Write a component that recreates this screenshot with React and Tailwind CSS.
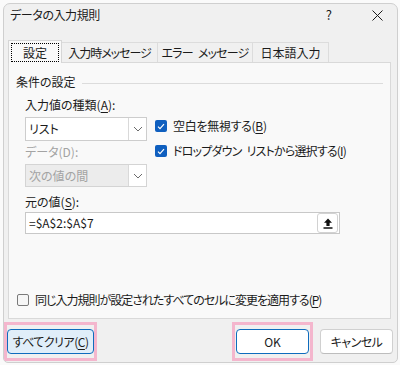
import React from 'react'

const FONT = "[font-family:'Noto_Sans_CJK_JP','Noto_Sans',sans-serif] [font-feature-settings:'palt']"

const Chevron = () => (
    <svg width="10" height="6" viewBox="0 0 10 6" fill="none">
        <path d="M1 1 L5 5 L9 1" stroke="#6b6b6b" strokeWidth="1" />
    </svg>
)

const Check = ({ checked }) => (
    checked ? (
        <span className="w-[12px] h-[12px] rounded-[2px] bg-[#0f5fbf] flex items-center justify-center shrink-0">
            <svg width="8" height="7" viewBox="0 0 8 7" fill="none">
                <path d="M1 3.6 L3 5.6 L7 1.2" stroke="white" strokeWidth="1.2" />
            </svg>
        </span>
    ) : (
        <span className="w-[12px] h-[12px] rounded-[2px] border border-[#7a7a7a] bg-[#f6f6f6] shrink-0" />
    )
)

const U = ({ children }) => <span className="underline underline-offset-2">{children}</span>

export default function App() {
    return (
        <div className={`w-[400px] h-[365px] bg-[#fafafa] pt-[3px] pl-[3px] text-[12px] text-[#1b1b1b] ${FONT}`}>
            <div className="w-[395px] h-[360px] rounded-t-[7px] rounded-b-[5px] border border-[#cfcfcf] bg-[#f0f0f0] flex flex-col overflow-hidden">
                {/* title bar */}
                <div className="h-[22px] flex items-center pl-[6px] pr-[14px]">
                    <span className="leading-[16px] tracking-[-0.4px]">データの入力規則</span>
                    <span className="ml-auto mr-[40px] text-[13px]">?</span>
                    <svg width="11" height="11" viewBox="0 0 11 11" fill="none">
                        <path d="M0.5 0.5 L10.5 10.5 M10.5 0.5 L0.5 10.5" stroke="#1b1b1b" strokeWidth="1" />
                    </svg>
                </div>

                {/* tabs */}
                <div className="flex items-end h-[22px] mt-[14px] pl-[4px]">
                    <div className="h-[23px] w-[54px] bg-[#f9f9f9] border border-b-0 border-[#d6d6d6] flex items-center justify-center relative z-10 -mb-px">
                        <span className="border border-dotted border-black w-[48px] h-[19px] leading-[17px] text-center">設定</span>
                    </div>
                    <div className="h-[20px] w-[96px] border border-b-0 border-l-0 border-[#dcdcdc] flex items-center justify-center leading-[16px] tracking-[-1px]">入力時メッセージ</div>
                    <div className="h-[20px] w-[95px] border border-b-0 border-l-0 border-[#dcdcdc] flex items-center justify-center leading-[16px] tracking-[-0.8px]">エラー<span className="w-[5px]" />メッセージ</div>
                    <div className="h-[20px] w-[76px] border border-b-0 border-l-0 border-[#dcdcdc] flex items-center justify-center leading-[16px]">日本語入力</div>
                </div>

                {/* panel */}
                <div className="ml-[4px] w-[383px] h-[257px] border border-[#d9d9d9] bg-[#f9f9f9] flex flex-col">
                    <div className="flex items-center mt-[11px] pl-[7px] pr-[7px] h-[16px]">
                        <span className="leading-[16px]">条件の設定</span>
                        <div className="flex-1 h-px bg-[#dcdcdc] ml-[6px] mt-[2px]" />
                    </div>

                    <div className="pl-[16px] mt-[7px] leading-[16px]">
                        入力値の種類(<U>A</U>):
                    </div>

                    <div className="flex pl-[16px] mt-[4px]">
                        <div className="flex flex-col">
                            <div className="w-[122px] h-[24px] bg-white border border-[#cdcdcd] flex">
                                <span className="flex-1 pl-[3px] leading-[22px]">リスト</span>
                                <span className="w-[18px] border-l border-[#d9d9d9] flex items-center justify-center">
                                    <Chevron />
                                </span>
                            </div>
                            <div className="mt-[3px] leading-[16px] text-[#a3a3a3]">データ(D):</div>
                            <div className="mt-[4px] w-[122px] h-[23px] bg-[#ececec] border border-[#d4d4d4] flex">
                                <span className="flex-1 pl-[3px] leading-[21px] text-[#a3a3a3]">次の値の間</span>
                                <span className="w-[18px] bg-white border-l border-[#d9d9d9] flex items-center justify-center">
                                    <Chevron />
                                </span>
                            </div>
                        </div>
                        <div className="flex flex-col ml-[8px] pt-[1px]">
                            <div className="flex items-center gap-[6px] h-[16px]">
                                <Check checked />
                                <span className="leading-[16px] tracking-[-0.3px]">空白を無視する(<U>B</U>)</span>
                            </div>
                            <div className="flex items-center gap-[6px] h-[16px] mt-[9px]">
                                <Check checked />
                                <span className="leading-[16px] tracking-[-0.8px]">
                                    ドロップダウン<span className="inline-block w-[5px]" />リストから選択する(<U>I</U>)
                                </span>
                            </div>
                        </div>
                    </div>

                    <div className="pl-[16px] mt-[7px] leading-[16px]">
                        元の値(<U>S</U>):
                    </div>
                    <div className="ml-[16px] mt-[2px] w-[315px] h-[22px] bg-white border border-[#c8c8c8] flex items-center">
                        <span className="flex-1 pl-[3px] leading-[16px]">=$A$2:$A$7</span>
                        <span className="w-[21px] h-[20px] mr-px rounded-[3px] border border-[#d2d2d2] bg-white flex items-center justify-center">
                            <svg width="10" height="11" viewBox="0 0 10 11" fill="none">
                                <path d="M5 0.5 L1 4.8 H3.4 V8 H6.6 V4.8 H9 Z" fill="#111" />
                                <path d="M0.5 10 H9.5" stroke="#111" strokeWidth="1.4" />
                            </svg>
                        </span>
                    </div>

                    <div className="flex-1" />
                    <div className="flex items-center gap-[6px] pl-[8px] mb-[10px] h-[16px]">
                        <Check />
                        <span className="leading-[16px] tracking-[-1px]">同じ入力規則が設定されたすべてのセルに変更を適用する(<U>P</U>)</span>
                    </div>
                </div>

                {/* buttons */}
                <div className="flex items-start mt-[3px] pr-[4px]">
                    <div className="border-[3px] border-[#f4b6cd] py-[4px]">
                        <div className="w-[87px] h-[25px] rounded-[4px] border border-[#0f6cbd] bg-[#e0eef9] flex items-center justify-center leading-[16px] tracking-[-0.5px]">
                            すべてクリア(<U>C</U>)
                        </div>
                    </div>
                    <div className="ml-auto border-[3px] border-[#f4b6cd] py-[4px] px-[1px]">
                        <div className="w-[73px] h-[25px] rounded-[4px] border border-[#0f6cbd] bg-white flex items-center justify-center leading-[16px]">
                            OK
                        </div>
                    </div>
                    <div className="ml-[7px] mt-[7px] w-[73px] h-[25px] rounded-[4px] border border-[#d0d0d0] border-b-[#bdbdbd] bg-white flex items-center justify-center leading-[16px] tracking-[-0.5px]">
                        キャンセル
                    </div>
                </div>
            </div>
        </div>
    )
}
